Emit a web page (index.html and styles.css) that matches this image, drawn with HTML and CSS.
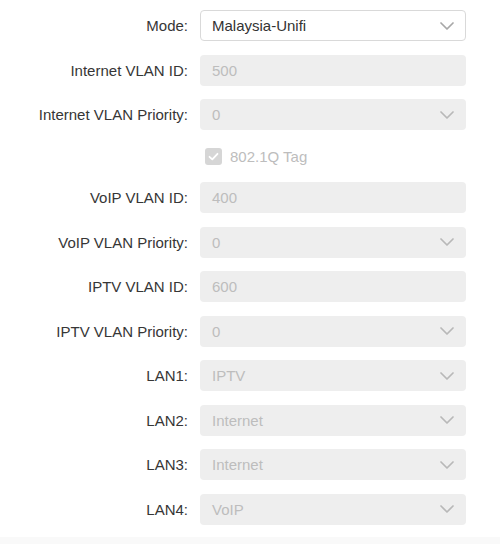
FILE: index.html
```html
<!DOCTYPE html>
<html>
<head>
<meta charset="utf-8">
<link rel="stylesheet" href="styles.css">
</head>
<body>
<div class="form">
  <label class="lbl">Mode:</label>
  <div class="field select active"><span>Malaysia-Unifi</span><svg class="chev" viewBox="0 0 14 8"><path d="M1 1L7 7L13 1"/></svg></div>

  <label class="lbl">Internet VLAN ID:</label>
  <div class="field disabled"><span>500</span></div>

  <label class="lbl">Internet VLAN Priority:</label>
  <div class="field select disabled"><span>0</span><svg class="chev" viewBox="0 0 14 8"><path d="M1 1L7 7L13 1"/></svg></div>

  <span class="lbl"></span>
  <div class="check-row"><span class="box"><svg viewBox="0 0 17 17"><path d="M4.5 8.8L7.3 11.4L12.5 5.8"/></svg></span><span class="check-text">802.1Q Tag</span></div>

  <label class="lbl">VoIP VLAN ID:</label>
  <div class="field disabled"><span>400</span></div>

  <label class="lbl">VoIP VLAN Priority:</label>
  <div class="field select disabled"><span>0</span><svg class="chev" viewBox="0 0 14 8"><path d="M1 1L7 7L13 1"/></svg></div>

  <label class="lbl">IPTV VLAN ID:</label>
  <div class="field disabled"><span>600</span></div>

  <label class="lbl">IPTV VLAN Priority:</label>
  <div class="field select disabled"><span>0</span><svg class="chev" viewBox="0 0 14 8"><path d="M1 1L7 7L13 1"/></svg></div>

  <label class="lbl">LAN1:</label>
  <div class="field select disabled"><span>IPTV</span><svg class="chev" viewBox="0 0 14 8"><path d="M1 1L7 7L13 1"/></svg></div>

  <label class="lbl">LAN2:</label>
  <div class="field select disabled"><span>Internet</span><svg class="chev" viewBox="0 0 14 8"><path d="M1 1L7 7L13 1"/></svg></div>

  <label class="lbl">LAN3:</label>
  <div class="field select disabled"><span>Internet</span><svg class="chev" viewBox="0 0 14 8"><path d="M1 1L7 7L13 1"/></svg></div>

  <label class="lbl">LAN4:</label>
  <div class="field select disabled"><span>VoIP</span><svg class="chev" viewBox="0 0 14 8"><path d="M1 1L7 7L13 1"/></svg></div>
</div>
<div class="footer-band"></div>
</body>
</html>
```
FILE: styles.css
```css
html, body {
  margin: 0;
  padding: 0;
  background: #fff;
}
body {
  font-family: "Liberation Sans", Arial, sans-serif;
  font-size: 15px;
  color: #333;
  width: 500px;
  height: 544px;
  overflow: hidden;
  display: flex;
  flex-direction: column;
}
.form {
  display: grid;
  grid-template-columns: 188px 266px;
  column-gap: 12px;
  row-gap: 13.5px;
  padding-top: 10px;
  flex: 1;
  align-content: start;
}
.lbl {
  display: flex;
  align-items: center;
  justify-content: flex-end;
  color: #363636;
  white-space: nowrap;
}
.field {
  box-sizing: border-box;
  height: 31px;
  border-radius: 4px;
  display: flex;
  align-items: center;
  justify-content: space-between;
  padding: 0 12px 0 12px;
}
.field.active {
  border: 1px solid #d9d9d9;
  padding-left: 11px;
  padding-right: 11px;
  color: #333;
  background: #fff;
}
.field.disabled {
  background: #eeeeee;
  color: #bdbdbd;
}
.chev {
  width: 14px;
  height: 8px;
  fill: none;
  stroke: #b8b8b8;
  stroke-width: 1.7;
  stroke-linecap: round;
  stroke-linejoin: round;
}
.field.active .chev {
  stroke: #a8a8a8;
}
.check-row {
  height: 25px;
  display: flex;
  align-items: center;
  padding-left: 5px;
}
.box {
  width: 17px;
  height: 17px;
  border-radius: 3px;
  background: #d6d6d6;
  display: flex;
}
.box svg {
  width: 17px;
  height: 17px;
  fill: none;
  stroke: #fff;
  stroke-width: 1.8;
  stroke-linecap: round;
  stroke-linejoin: round;
}
.check-text {
  margin-left: 8px;
  color: #bdbdbd;
}
.footer-band {
  height: 7px;
  background: #f9f9f9;
}
```
